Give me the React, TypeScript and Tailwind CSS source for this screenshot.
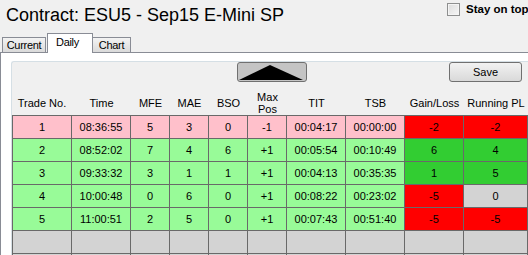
import React from 'react';

type Tone = 'pink' | 'green' | 'red' | 'lime' | 'gray';

interface Trade {
  no: string;
  time: string;
  mfe: string;
  mae: string;
  bso: string;
  maxPos: string;
  tit: string;
  tsb: string;
  gain: string;
  running: string;
  row: Tone;
  gainTone: Tone;
  runTone: Tone;
}

const TONE: Record<Tone, string> = {
  pink: 'bg-[#ffc0cb]',
  green: 'bg-[#98fb98]',
  red: 'bg-[#ff0000]',
  lime: 'bg-[#32cd32]',
  gray: 'bg-[#d3d3d3]',
};

// column widths incl. right border; first one also carries the left border
const COL_W = [
  'w-[60px] border-l',
  'w-[59px]',
  'w-[39px]',
  'w-[39px]',
  'w-[39px]',
  'w-[39px]',
  'w-[59px]',
  'w-[59px]',
  'w-[59px]',
  'w-[64px]',
];

const HEAD_W = [
  'w-[60px]',
  'w-[59px]',
  'w-[39px]',
  'w-[39px]',
  'w-[39px]',
  'w-[39px]',
  'w-[59px]',
  'w-[59px]',
  'w-[59px]',
  'w-[64px]',
];

const HEADERS = ['Trade No.', 'Time', 'MFE', 'MAE', 'BSO', 'Max Pos', 'TIT', 'TSB', 'Gain/Loss', 'Running PL'];

const TRADES: Trade[] = [
  { no: '1', time: '08:36:55', mfe: '5', mae: '3', bso: '0', maxPos: '-1', tit: '00:04:17', tsb: '00:00:00', gain: '-2', running: '-2', row: 'pink', gainTone: 'red', runTone: 'red' },
  { no: '2', time: '08:52:02', mfe: '7', mae: '4', bso: '6', maxPos: '+1', tit: '00:05:54', tsb: '00:10:49', gain: '6', running: '4', row: 'green', gainTone: 'lime', runTone: 'lime' },
  { no: '3', time: '09:33:32', mfe: '3', mae: '1', bso: '1', maxPos: '+1', tit: '00:04:13', tsb: '00:35:35', gain: '1', running: '5', row: 'green', gainTone: 'lime', runTone: 'lime' },
  { no: '4', time: '10:00:48', mfe: '0', mae: '6', bso: '0', maxPos: '+1', tit: '00:08:22', tsb: '00:23:02', gain: '-5', running: '0', row: 'green', gainTone: 'red', runTone: 'gray' },
  { no: '5', time: '11:00:51', mfe: '2', mae: '5', bso: '0', maxPos: '+1', tit: '00:07:43', tsb: '00:51:40', gain: '-5', running: '-5', row: 'green', gainTone: 'red', runTone: 'red' },
];

const EMPTY = ['', '', '', '', '', '', '', '', '', ''];
const ALL_GRAY: Tone[] = Array(10).fill('gray');

const Row: React.FC<{ cells: string[]; tones: Tone[]; first?: boolean }> = ({ cells, tones, first }) => (
  <div className={`flex ${first ? 'h-[24px] border-t' : 'h-[23px]'} border-[#696969]`}>
    {cells.map((c, i) => (
      <div
        key={i}
        className={`${COL_W[i]} ${TONE[tones[i]]} shrink-0 border-r border-b border-[#696969] flex items-center justify-center leading-[13px]`}
      >
        {c}
      </div>
    ))}
  </div>
);

export default function App() {
  return (
    <div className="w-[528px] h-[255px] overflow-hidden bg-[#f0f0f0] text-black font-['Liberation_Sans',Arial,sans-serif] flex flex-col">
      {/* Title + stay on top */}
      <div className="flex h-[33px] shrink-0">
        <div className="flex-1 pl-[6px] pt-[3px] text-[18px] leading-[24px] whitespace-nowrap">
          Contract: ESU5 - Sep15 E-Mini SP
        </div>
        <div className="w-[81px] shrink-0 flex items-start pt-[3px] gap-[6px] whitespace-nowrap overflow-hidden">
          <span className="w-[13px] h-[13px] shrink-0 border border-[#8e8f8f] bg-gradient-to-br from-[#dcdcdc] to-[#f6f6f6] shadow-[inset_0_0_0_1px_#f4f4f4]" />
          <span className="text-[11.5px] font-bold leading-[13px]">Stay on top</span>
        </div>
      </div>

      {/* Tabs */}
      <div className="flex items-end h-[19px] pl-[2px] shrink-0 text-[11px] tracking-[-0.3px]">
        <div className="w-[44px] h-[15px] border-t border-l border-r border-[#898c95] bg-gradient-to-b from-[#f3f3f3] to-[#dadada] flex items-center justify-center leading-[13px] pt-[1px]">
          Current
        </div>
        <div className="w-[46px] h-[20px] ml-[1px] mb-[-1px] relative z-10 border-t border-l border-r border-[#898c95] bg-white flex items-start justify-center leading-[13px] pt-[2px] pr-[5px]">
          Daily
        </div>
        <div className="w-[38px] h-[15px] border-t border-r border-[#898c95] bg-gradient-to-b from-[#f3f3f3] to-[#dadada] flex items-center justify-center leading-[13px] pt-[1px]">
          Chart
        </div>
      </div>

      {/* Tab page */}
      <div className="flex-1 border-t border-l border-[#898c95] bg-white pl-[10px] pt-[8px]">
        <div className="h-full border-t border-l border-[#d5dfe5] rounded-tl-[3px] bg-[#f0f0f0] text-[11px]">
          {/* Buttons */}
          <div className="flex h-[20px]">
            <button className="ml-[225px] w-[70px] h-[20px] border border-[#707070] rounded-[3px] bg-[#c4c4c4] flex items-end justify-center p-0">
              <svg width="68" height="18" viewBox="0 0 68 18" className="block">
                <polygon points="1,17 32,2 65,17" fill="#000" />
              </svg>
            </button>
            <button className="ml-[142px] w-[73px] h-[20px] border border-[#707070] rounded-[3px] bg-gradient-to-b from-[#f2f2f2] to-[#d9d9d9] flex items-center justify-center text-[11px] leading-[13px]">
              Save
            </button>
          </div>

          {/* Column headers */}
          <div className="flex h-[33px] pt-[8px]">
            {HEADERS.map((h, i) => (
              <div
                key={h}
                className={`${HEAD_W[i]} shrink-0 flex items-center justify-center text-center leading-[12px]`}
              >
                {h === 'Max Pos' ? (
                  <span>
                    Max
                    <br />
                    Pos
                  </span>
                ) : (
                  h
                )}
              </div>
            ))}
          </div>

          {/* Grid */}
          {TRADES.map((t, i) => (
            <Row
              key={t.no}
              first={i === 0}
              cells={[t.no, t.time, t.mfe, t.mae, t.bso, t.maxPos, t.tit, t.tsb, t.gain, t.running]}
              tones={[t.row, t.row, t.row, t.row, t.row, t.row, t.row, t.row, t.gainTone, t.runTone]}
            />
          ))}
          <Row cells={EMPTY} tones={ALL_GRAY} />
          <Row cells={EMPTY} tones={ALL_GRAY} />
        </div>
      </div>
    </div>
  );
}
